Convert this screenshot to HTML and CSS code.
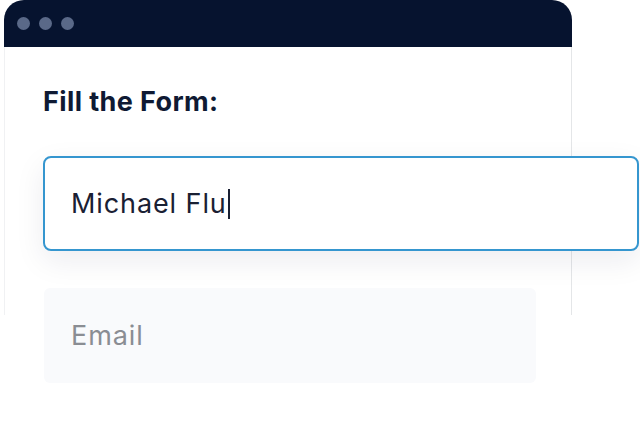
FILE: index.html
```html
<!DOCTYPE html>
<html lang="en">
<head>
    <meta charset="UTF-8">
    <meta name="viewport" content="width=device-width, initial-scale=1.0">
    <title>Fill the Form</title>
    <link rel="stylesheet" href="styles.css">
</head>
<body>
    <div class="window">
        <div class="titlebar">
            <span class="dot"></span>
            <span class="dot"></span>
            <span class="dot"></span>
        </div>
        <div class="content">
            <h2>Fill the Form:</h2>
            <div class="field field-active">
                <span class="value">Michael Flu</span><span class="caret"></span>
            </div>
            <div class="field field-empty">
                <span class="placeholder">Email</span>
            </div>
        </div>
    </div>
</body>
</html>
```

FILE: styles.css
```css
* {
    box-sizing: border-box;
    font-family: 'Inter', 'Noto Sans', sans-serif;
}

html, body {
    min-height: 100vh;
}

body {
    background-color: #fff;
    margin: 0;
    padding: 0;
}

.window {
    width: 568px;
    margin-left: 4px;
    padding-bottom: 70px;
}

.titlebar {
    height: 47px;
    background-color: #06132f;
    border-radius: 20px 20px 0 0;
    display: flex;
    align-items: center;
    gap: 9px;
    padding-left: 13px;
}

.dot {
    width: 13px;
    height: 13px;
    border-radius: 50%;
    background-color: #5a6988;
}

.content {
    height: 268px;
    border-left: 1px solid #f0f1f3;
    border-right: 1px solid #e4e6e8;
    padding: 37px 0 0 38px;
}

h2 {
    margin: 0 0 36px 0;
    font-size: 27px;
    font-weight: 700;
    letter-spacing: 0.4px;
    color: #0f1a33;
    line-height: 36px;
}

.field {
    height: 95px;
    border-radius: 8px;
    display: flex;
    align-items: center;
    padding-left: 26px;
    font-size: 27px;
    letter-spacing: 0.9px;
}

.field-active {
    width: 596px;
    background-color: #fff;
    border: 2px solid #3596cf;
    box-shadow: 0 10px 30px rgba(20, 30, 60, 0.08);
    color: #1a2033;
    margin-bottom: 37px;
}

.caret {
    width: 2px;
    height: 30px;
    margin-left: 1px;
    background-color: #1a2033;
}

.field-empty {
    width: 492px;
    background-color: #f9fafc;
    color: #8a8d93;
    border-radius: 6px;
    margin-left: 1px;
    padding-left: 27px;
}
```
